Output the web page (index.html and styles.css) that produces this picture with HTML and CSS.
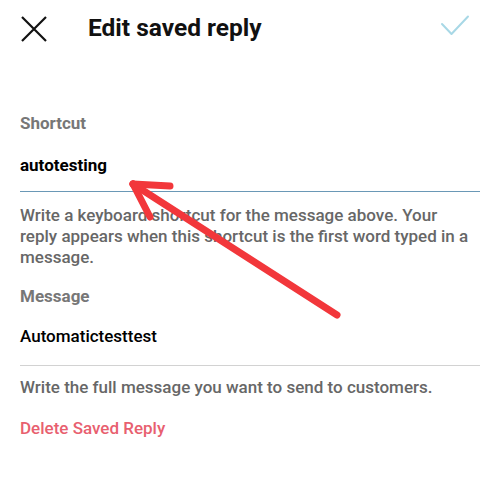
FILE: index.html
```html
<!DOCTYPE html>
<html>
<head>
<meta charset="utf-8">
<link rel="stylesheet" href="styles.css">
</head>
<body>
<div class="page">
  <header class="topbar">
    <svg class="icon-close" width="26" height="26" viewBox="0 0 26 26"><path d="M1 1 L25 25 M25 1 L1 25" stroke="#111" stroke-width="2.2" fill="none"/></svg>
    <h1 class="title">Edit saved reply</h1>
    <svg class="icon-check" width="30" height="22" viewBox="0 0 30 22"><path d="M2 9 L11.5 19 L28 1.5" stroke="#a8d8e6" stroke-width="2" fill="none" stroke-linecap="round" stroke-linejoin="round"/></svg>
  </header>
  <main class="form">
    <div class="label label-first">Shortcut</div>
    <div class="value value-active">autotesting</div>
    <p class="helper helper-first">Write a keyboard shortcut for the message above. Your reply appears when this shortcut is the first word typed in a message.</p>
    <div class="label label-second">Message</div>
    <div class="value value-plain">Automatictesttest</div>
    <p class="helper helper-second">Write the full message you want to send to customers.</p>
    <div class="delete">Delete Saved Reply</div>
  </main>
  <svg class="annotation" width="500" height="500" viewBox="0 0 500 500">
    <g stroke="#f2373b" stroke-width="7" stroke-linecap="round" fill="none">
      <path d="M337 315 L133 184"/>
      <path d="M133 184 L170 186"/>
      <path d="M133 184 L150 217"/>
    </g>
  </svg>
</div>
</body>
</html>
```
FILE: styles.css
```css
html, body {
  margin: 0;
  padding: 0;
  background: #ffffff;
}
body {
  font-family: Roboto, "Liberation Sans", sans-serif;
}
.page {
  position: relative;
  width: 500px;
  height: 500px;
  overflow: hidden;
}
.topbar {
  display: flex;
  align-items: center;
  height: 56px;
  padding: 0 0 0 21px;
}
.icon-close {
  flex: none;
  margin-top: 1px;
}
.title {
  margin: 0 0 0 41px;
  font-size: 24.5px;
  font-weight: 700;
  color: #111;
  line-height: 28px;
  flex: 1;
}
.icon-check {
  flex: none;
  margin: -4px 30px 0 0;
}
.form {
  padding: 0 20px;
}
.label {
  font-size: 17px;
  line-height: 21px;
  font-weight: 700;
  color: #777777;
}
.label-first { margin-top: 57px; }
.label-second { margin-top: 18px; }
.value {
  font-size: 17px;
  line-height: 21px;
  font-weight: 700;
  color: #000;
}
.value-active {
  margin-top: 21px;
  padding-bottom: 15px;
  border-bottom: 1px solid #6a98b6;
}
.value-plain {
  margin-top: 19px;
  font-weight: 500;
  padding-bottom: 18px;
  border-bottom: 1px solid #d2d2d2;
}
.helper {
  margin: 0;
  padding-right: 8px;
  font-size: 17px;
  line-height: 21px;
  font-weight: 500;
  color: #676767;
}
.helper-first { margin-top: 13px; }
.helper-second { margin-top: 11px; }
.delete {
  margin-top: 20px;
  font-size: 17px;
  line-height: 21px;
  font-weight: 500;
  color: #e8606f;
}
.annotation {
  position: absolute;
  left: 0;
  top: 0;
  pointer-events: none;
}
```
